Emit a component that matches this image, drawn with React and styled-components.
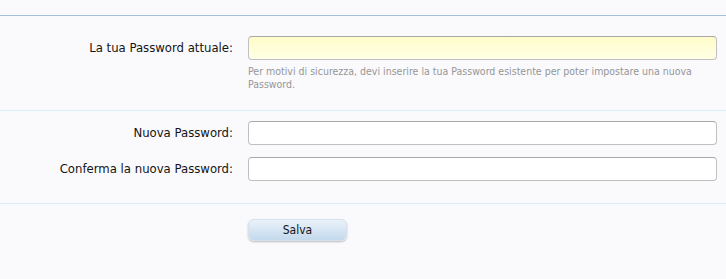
import React from "react";
import styled, { createGlobalStyle } from "styled-components";

const Global = createGlobalStyle`
  html, body { margin: 0; padding: 0; background: #fafafd; }
  body { font-family: "DejaVu Sans Condensed", "DejaVu Sans", sans-serif; color: #141414; }
`;

const Page = styled.div`
  width: 726px;
  height: 279px;
  background: #fafafd;
  padding-top: 15px;
  box-sizing: border-box;
`;

const Fieldset = styled.div`
  border-top: 1px solid ${(p) => p.$border};
  padding: ${(p) => p.$pad};
  display: flex;
  flex-direction: column;
  gap: 12px;
`;

const Row = styled.div`
  display: grid;
  grid-template-columns: 233px 469px;
  column-gap: 15px;
  align-items: start;
`;

const Label = styled.label`
  text-align: right;
  font-size: 13px;
  line-height: 24px;
  color: #141414;
`;

const Field = styled.div`
  display: flex;
  flex-direction: column;
`;

const Input = styled.input`
  box-sizing: border-box;
  width: 469px;
  height: 24px;
  border: 1px solid #c0c0c0;
  border-top-color: #a8a8a8;
  border-radius: 4px;
  background: ${(p) =>
    p.$highlight ? "linear-gradient(to bottom, #fffcc8, #ffffe6)" : "#ffffff"};
  outline: none;
  margin: 0;
`;

const Explain = styled.p`
  margin: 5px 0 0;
  font-size: 10.5px;
  line-height: 13px;
  color: #969696;
`;

const Button = styled.button`
  width: 99px;
  height: 22px;
  border: 1px solid #d6e2ee;
  border-radius: 6px;
  background: linear-gradient(to bottom, #eaf2f9, #c3d9ed);
  box-shadow: 0 1px 2px rgba(0, 0, 0, 0.25);
  font-family: inherit;
  font-size: 12px;
  color: #141414;
  padding: 0;
`;

export default function App() {
  return (
    <Page>
      <Global />
      <Fieldset $border="#a5c0db" $pad="20px 0 19px">
        <Row>
          <Label>La tua Password attuale:</Label>
          <Field>
            <Input type="password" $highlight />
            <Explain>
              Per motivi di sicurezza, devi inserire la tua Password esistente per poter impostare una nuova Password.
            </Explain>
          </Field>
        </Row>
      </Fieldset>
      <Fieldset $border="#d7edfc" $pad="10px 0 22px">
        <Row>
          <Label>Nuova Password:</Label>
          <Input type="password" />
        </Row>
        <Row>
          <Label>Conferma la nuova Password:</Label>
          <Input type="password" />
        </Row>
      </Fieldset>
      <Fieldset $border="#d7edfc" $pad="15px 0 0">
        <Row>
          <span />
          <Button>Salva</Button>
        </Row>
      </Fieldset>
    </Page>
  );
}
